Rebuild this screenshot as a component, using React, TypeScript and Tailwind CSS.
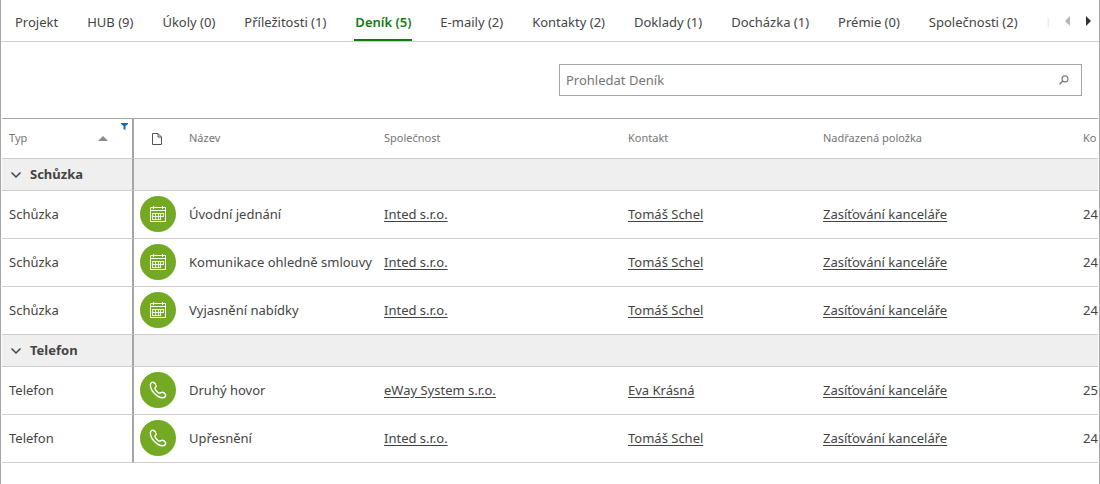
import { useState } from "react";

type ItemType = "meeting" | "phone";

interface JournalItem {
  name: string;
  company: string;
  contact: string;
  parent: string;
  code: string;
}

interface JournalGroup {
  type: ItemType;
  label: string;
  items: JournalItem[];
}

const tabs = [
  "Projekt",
  "HUB (9)",
  "Úkoly (0)",
  "Příležitosti (1)",
  "Deník (5)",
  "E-maily (2)",
  "Kontakty (2)",
  "Doklady (1)",
  "Docházka (1)",
  "Prémie (0)",
  "Společnosti (2)",
  "H",
];

const groups: JournalGroup[] = [
  {
    type: "meeting",
    label: "Schůzka",
    items: [
      { name: "Úvodní jednání", company: "Inted s.r.o.", contact: "Tomáš Schel", parent: "Zasíťování kanceláře", code: "24" },
      { name: "Komunikace ohledně smlouvy", company: "Inted s.r.o.", contact: "Tomáš Schel", parent: "Zasíťování kanceláře", code: "24" },
      { name: "Vyjasnění nabídky", company: "Inted s.r.o.", contact: "Tomáš Schel", parent: "Zasíťování kanceláře", code: "24" },
    ],
  },
  {
    type: "phone",
    label: "Telefon",
    items: [
      { name: "Druhý hovor", company: "eWay System s.r.o.", contact: "Eva Krásná", parent: "Zasíťování kanceláře", code: "25" },
      { name: "Upřesnění", company: "Inted s.r.o.", contact: "Tomáš Schel", parent: "Zasíťování kanceláře", code: "24" },
    ],
  },
];

function CalendarIcon() {
  return (
    <svg width="16" height="16" viewBox="0 0 16 16" fill="none" stroke="#fff" aria-hidden="true">
      <path d="M0.5 4V1.500h15V4M3.500 0v3M12.500 0v3" />
      <path d="M0 4.500h16M0.500 4.500v11h15v-11" />
      <path d="M2.500 7.500h11M2.500 10.500h11M2.500 13.500h8" strokeOpacity="0.8" />
      <path d="M2.500 7v7M5.500 7v7M8.500 7v7M10.500 7v7M13.500 7v4" strokeOpacity="0.8" />
    </svg>
  );
}

function PhoneIcon() {
  return (
    <svg width="18" height="18" viewBox="0 0 18 18" fill="none" stroke="#fff" strokeWidth="1.4" strokeLinejoin="round" aria-hidden="true">
      <path d="M4.6 1.3c-1.3-.7-3 .6-3.2 2.3-.2 2.600 1.400 6 4.100 8.800 2.700 2.700 6 4.500 8.700 4.300 1.600-.2 2.800-1.700 2.300-2.900-.4-1-1.700-2.300-2.900-2.600-1.500-.3-1.700 1.200-2.900 1.100-1.400-.2-4.500-3.200-4.700-4.700-.1-1.200 1.500-1.400 1.200-2.800-.3-1.200-1.500-2.900-2.600-3.500z" />
    </svg>
  );
}

function SearchIcon() {
  return (
    <svg width="10" height="10" viewBox="0 0 10 10" fill="none" stroke="#7a7a7a" aria-hidden="true">
      <circle cx="6" cy="3.900" r="3" strokeWidth="1.100" />
      <path d="M3.900 6L0.600 9.300" strokeWidth="1.500" />
    </svg>
  );
}

function TypeBadge({ type }: { type: ItemType }) {
  return (
    <span className="flex size-9 items-center justify-center rounded-full bg-[#74aa23]">
      {type === "meeting" ? <CalendarIcon /> : <PhoneIcon />}
    </span>
  );
}

export default function App() {
  const [active, setActive] = useState("Deník (5)");
  const [query, setQuery] = useState("");
  const [collapsed, setCollapsed] = useState<string[]>([]);

  const toggle = (label: string) =>
    setCollapsed((c) => (c.includes(label) ? c.filter((l) => l !== label) : [...c, label]));

  const headClass = "h-[41px] border-t border-b border-t-[#a6a6a6] border-b-[#cfcfcf] px-[7px] font-normal";
  const cellClass = "h-12 border-b border-[#cfcfcf] px-[7px] whitespace-nowrap";
  const dividerClass = "border-r-2 border-r-[#a6a6a6]";
  const linkClass = "underline underline-offset-2";

  return (
    <div className="min-h-screen overflow-hidden border-x border-[#a6a6a6] bg-white font-['Noto_Sans','Segoe_UI',sans-serif] text-[13px] text-[#444]">
      {/* Tabs */}
      <div className="flex h-[42px] border-b border-[#cfcfcf]">
        <div className="relative min-w-0 flex-1 overflow-hidden">
          <div role="tablist" className="flex h-full gap-[27px] pl-[13px]">
            {tabs.map((tab) => (
              <button
                key={tab}
                role="tab"
                aria-selected={active === tab}
                className={`shrink-0 cursor-pointer border-b-2 px-px pt-1.5 whitespace-nowrap ${
                  active === tab ? "border-[#107c10] font-semibold text-[#107c10]" : "border-transparent"
                }`}
                onClick={() => setActive(tab)}
              >
                {tab}
              </button>
            ))}
          </div>
          <div className="pointer-events-none absolute inset-y-0 right-0 w-4 bg-linear-to-r from-white/50 to-white to-60%" />
        </div>
        <div className="flex items-center gap-4 pr-2 pl-2">
          <button aria-label="Předchozí záložky" className="cursor-pointer text-[#b5b5b5]">
            <svg width="5" height="10" viewBox="0 0 5 10" fill="currentColor"><path d="M5 0v10L0 5z" /></svg>
          </button>
          <button aria-label="Další záložky" className="cursor-pointer text-[#333]">
            <svg width="5" height="10" viewBox="0 0 5 10" fill="currentColor"><path d="M0 0v10l5-5z" /></svg>
          </button>
        </div>
      </div>

      {/* Search */}
      <div className="flex justify-end py-[22px] pr-[17px]">
        <label className="flex h-8 w-[523px] items-center border border-[#a6a6a6] pr-3 pl-1.5">
          <input
            type="text"
            aria-label="Prohledat Deník"
            placeholder="Prohledat Deník"
            value={query}
            onChange={(e) => setQuery(e.target.value)}
            className="min-w-0 flex-1 pt-0.5 outline-none placeholder:text-[#767676]"
          />
          <SearchIcon />
        </label>
      </div>

      {/* Journal */}
      <div className="overflow-hidden px-px">
        <table className="w-full table-fixed border-separate border-spacing-0 text-left">
          <colgroup>
            <col className="w-[132px]" />
            <col className="w-12" />
            <col className="w-[195px]" />
            <col className="w-[244px]" />
            <col className="w-[195px]" />
            <col className="w-[260px]" />
            <col />
          </colgroup>
          <thead className="text-[11px] text-[#767676]">
            <tr>
              <th className={`${headClass} ${dividerClass} relative`}>
                <div className="flex items-center justify-between pr-[17px]">
                  Typ
                  <svg width="10" height="5" viewBox="0 0 10 5" fill="#8a8a8a"><path d="M0 5h10L5 0z" /></svg>
                </div>
                <svg className="absolute top-1 right-1" width="7" height="7" viewBox="0 0 7 7" fill="#0f6cbd">
                  <path d="M0 0h7v1L4.500 3V7L2.500 6V3L0 1z" />
                </svg>
              </th>
              <th className={headClass} aria-label="Typ položky">
                <svg className="ml-[11px]" width="10" height="12" viewBox="0 0 10 12" fill="none" stroke="#555">
                  <path d="M0.500 0.500h5.500l3.500 3.500v7.500h-9zM6 0.500v3.500h3.500" />
                </svg>
              </th>
              <th className={headClass}>Název</th>
              <th className={headClass}>Společnost</th>
              <th className={headClass}>Kontakt</th>
              <th className={headClass}>Nadřazená položka</th>
              <th className={headClass}>Ko</th>
            </tr>
          </thead>
          {groups.map((group) => (
            <tbody key={group.label}>
              <tr className="bg-[#efefef]">
                <th className={`h-8 border-b border-[#cfcfcf] pl-2 ${dividerClass}`}>
                  <button
                    aria-expanded={!collapsed.includes(group.label)}
                    className="flex cursor-pointer items-center gap-2 font-bold"
                    onClick={() => toggle(group.label)}
                  >
                    <svg width="12" height="12" viewBox="0 0 12 12" fill="none" stroke="#444" strokeWidth="1.500">
                      <path d={collapsed.includes(group.label) ? "M4 1.500l4.500 4.500L4 10.500" : "M1.500 3.500L6 8L10.500 3.500"} />
                    </svg>
                    {group.label}
                  </button>
                </th>
                <td colSpan={6} className="border-b border-[#cfcfcf]" />
              </tr>
              {!collapsed.includes(group.label) &&
                group.items.map((item) => (
                  <tr key={item.name}>
                    <td className={`${cellClass} ${dividerClass}`}>{group.label}</td>
                    <td className="border-b border-[#cfcfcf] pb-px pl-1.5"><TypeBadge type={group.type} /></td>
                    <td className={cellClass}>{item.name}</td>
                    <td className={cellClass}><a href="#" className={linkClass}>{item.company}</a></td>
                    <td className={cellClass}><a href="#" className={linkClass}>{item.contact}</a></td>
                    <td className={cellClass}><a href="#" className={linkClass}>{item.parent}</a></td>
                    <td className={`${cellClass} overflow-hidden`}>{item.code}</td>
                  </tr>
                ))}
            </tbody>
          ))}
        </table>
      </div>
    </div>
  );
}
